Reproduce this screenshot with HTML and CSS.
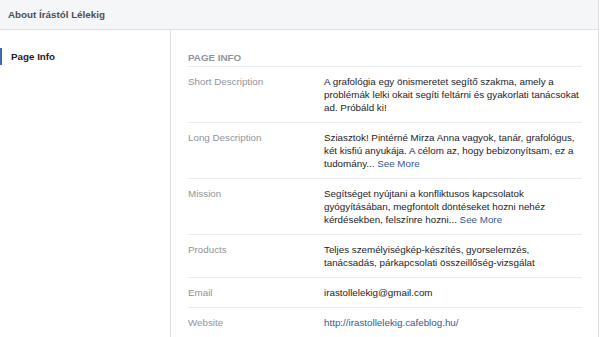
FILE: index.html
```html
<!DOCTYPE html>
<html lang="hu">
<head>
    <meta charset="UTF-8">
    <meta name="viewport" content="width=device-width, initial-scale=1.0">
    <title>About Írástól Lélekig</title>
    <link rel="stylesheet" href="styles.css">
</head>
<body>
    <div class="about">
        <div class="about-header">About Írástól Lélekig</div>
        <div class="about-body">
            <div class="sidebar">
                <div class="nav-item active">Page Info</div>
            </div>
            <div class="content">
                <div class="section-title">PAGE INFO</div>

                <div class="info-row">
                    <div class="info-label">Short Description</div>
                    <div class="info-value">A grafológia egy önismeretet segítő szakma, amely a problémák lelki okait segíti feltárni és gyakorlati tanácsokat ad. Próbáld ki!</div>
                </div>

                <div class="info-row">
                    <div class="info-label">Long Description</div>
                    <div class="info-value">Sziasztok! Pintérné Mirza Anna vagyok, tanár, grafológus, két kisfiú anyukája. A célom az, hogy bebizonyítsam, ez a tudomány... <a href="#" class="see-more">See More</a></div>
                </div>

                <div class="info-row">
                    <div class="info-label">Mission</div>
                    <div class="info-value">Segítséget nyújtani a konfliktusos kapcsolatok gyógyításában, megfontolt döntéseket hozni nehéz kérdésekben, felszínre hozni... <a href="#" class="see-more">See More</a></div>
                </div>

                <div class="info-row">
                    <div class="info-label">Products</div>
                    <div class="info-value">Teljes személyiségkép-készítés, gyorselemzés, tanácsadás, párkapcsolati összeillőség-vizsgálat</div>
                </div>

                <div class="info-row">
                    <div class="info-label">Email</div>
                    <div class="info-value">irastollelekig@gmail.com</div>
                </div>

                <div class="info-row">
                    <div class="info-label">Website</div>
                    <div class="info-value"><a href="#" class="link">http://irastollelekig.cafeblog.hu/</a></div>
                </div>
            </div>
        </div>
    </div>
</body>
</html>
```

FILE: styles.css
```css
* {
    margin: 0;
    padding: 0;
    box-sizing: border-box;
}

body {
    font-family: 'Liberation Sans', Arial, sans-serif;
    font-size: 9.8px;
    color: #1d2129;
    background: #fff;
    overflow: hidden;
}

.about {
    width: 599px;
    min-height: 337px;
    border-right: 1px solid #dddfe2;
}

.about-header {
    height: 30px;
    line-height: 29px;
    padding-left: 8px;
    background: #f5f6f7;
    border-bottom: 1px solid #dddfe2;
    font-weight: bold;
    color: #4b4f56;
}

.about-body {
    display: flex;
    min-height: 307px;
}

.sidebar {
    width: 171px;
    padding-top: 18px;
    border-right: 1px solid #dddfe2;
}

.nav-item {
    height: 17px;
    line-height: 17px;
    padding-left: 9px;
    border-left: 2px solid transparent;
    font-weight: bold;
    color: #1d2129;
}

.nav-item.active {
    border-left-color: #4267b2;
}

.content {
    flex: 1;
    padding: 21px 16px 0 17px;
}

.section-title {
    line-height: 13px;
    padding-bottom: 2px;
    border-bottom: 1px solid #e9ebee;
    font-weight: bold;
    color: #90949c;
}

.info-row {
    display: flex;
    padding: 8px 0;
    line-height: 13px;
    border-bottom: 1px solid #e9ebee;
}

.info-label {
    width: 136px;
    flex-shrink: 0;
    color: #90949c;
}

.info-value {
    flex: 1;
    color: #1d2129;
}

.see-more,
.link {
    color: #365899;
    text-decoration: none;
}
```
